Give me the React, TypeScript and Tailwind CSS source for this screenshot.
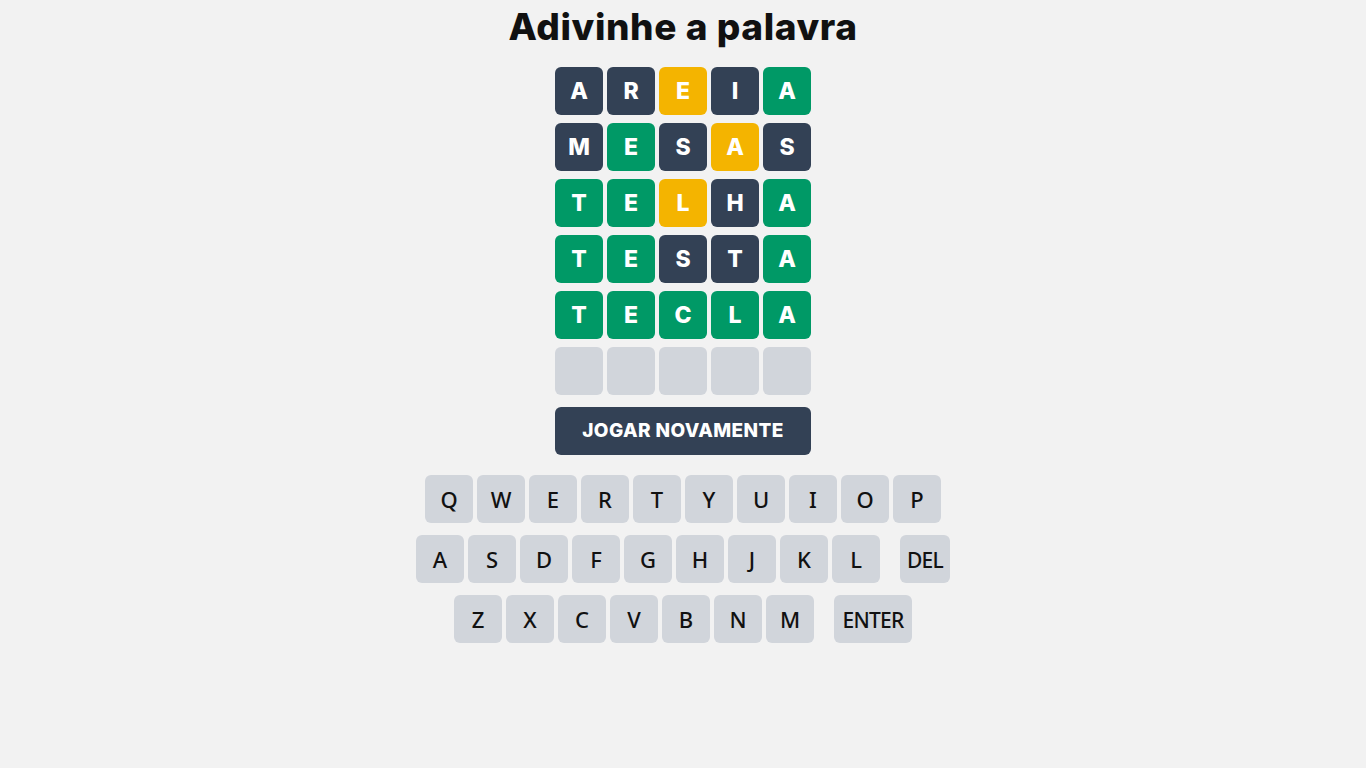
import React from 'react';

type Cell = { l: string; s: 'absent' | 'present' | 'correct' | 'empty' };

const rows: string[][] = [
  ['A', 'R', 'E', 'I', 'A'],
  ['M', 'E', 'S', 'A', 'S'],
  ['T', 'E', 'L', 'H', 'A'],
  ['T', 'E', 'S', 'T', 'A'],
  ['T', 'E', 'C', 'L', 'A'],
];

const states: Cell['s'][][] = [
  ['absent', 'absent', 'present', 'absent', 'correct'],
  ['absent', 'correct', 'absent', 'present', 'absent'],
  ['correct', 'correct', 'present', 'absent', 'correct'],
  ['correct', 'correct', 'absent', 'absent', 'correct'],
  ['correct', 'correct', 'correct', 'correct', 'correct'],
];

const tileColors = {
  absent: 'bg-[#334155] text-white',
  present: 'bg-[#f4b400] text-white',
  correct: 'bg-[#009966] text-white',
  empty: 'bg-[#d1d5db]',
};

const keyRows = [
  ['Q', 'W', 'E', 'R', 'T', 'Y', 'U', 'I', 'O', 'P'],
  ['A', 'S', 'D', 'F', 'G', 'H', 'J', 'K', 'L', 'DEL'],
  ['Z', 'X', 'C', 'V', 'B', 'N', 'M', 'ENTER'],
];

const heading = { fontFamily: 'Inter, "Noto Sans", sans-serif' };
const keyFont = { fontFamily: '"Noto Sans", "Open Sans", sans-serif' };

export default function App() {
  const grid: Cell[][] = [
    ...rows.map((r, i) => r.map((l, j) => ({ l, s: states[i][j] }))),
    Array.from({ length: 5 }, () => ({ l: '', s: 'empty' as const })),
  ];

  return (
    <div className="min-h-screen bg-[#f2f2f2] flex flex-col items-center">
      {/* Title */}
      <h1
        className="mt-[7px] h-10 text-[37px] leading-10 font-extrabold text-[#111] tracking-[0.6px]"
        style={heading}
      >
        Adivinhe a palavra
      </h1>

      {/* Board */}
      <div className="mt-[20px] flex flex-col gap-2">
        {grid.map((row, i) => (
          <div key={i} className="flex gap-1">
            {row.map((c, j) => (
              <div
                key={j}
                className={`w-12 h-12 rounded-md flex items-center justify-center text-[23px] font-extrabold ${tileColors[c.s]}`}
                style={heading}
              >
                {c.l}
              </div>
            ))}
          </div>
        ))}
      </div>

      <button
        className="mt-3 w-64 h-12 rounded-md bg-[#334155] text-white text-[19px] font-extrabold uppercase tracking-[0.4px]"
        style={heading}
      >
        Jogar novamente
      </button>

      {/* Keyboard */}
      <div className="mt-5 flex flex-col gap-3">
        {keyRows.map((row, i) => (
          <div key={i} className="flex justify-center gap-1">
            {row.map((k) => (
              <div
                key={k}
                className={`h-12 rounded-md bg-[#d1d5db] text-[#111] font-medium flex items-center justify-center ${
                  k === 'DEL'
                    ? 'ml-4 w-[50px] pt-[3px] text-[21px] tracking-[-0.8px]'
                    : k === 'ENTER'
                      ? 'ml-4 w-[78px] pt-[3px] text-[21px] tracking-[-0.8px]'
                      : 'w-12 text-[22px]'
                }`}
                style={keyFont}
              >
                {k}
              </div>
            ))}
          </div>
        ))}
      </div>
    </div>
  );
}
